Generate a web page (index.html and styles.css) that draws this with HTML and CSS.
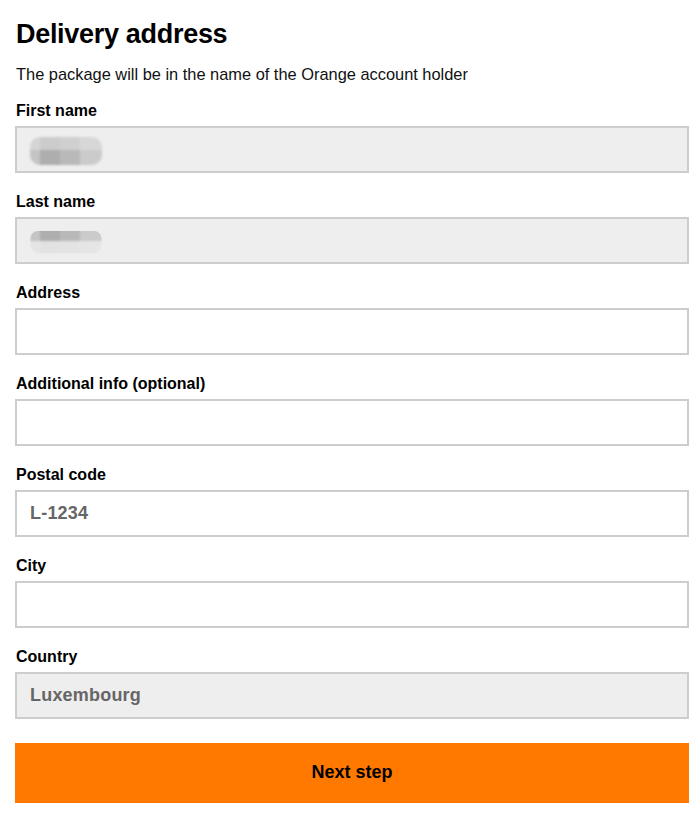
FILE: index.html
```html
<!DOCTYPE html>
<html lang="en">
<head>
<meta charset="utf-8">
<title>Delivery address</title>
<link rel="stylesheet" href="styles.css">
</head>
<body>
<main class="page">
  <h1 class="title">Delivery address</h1>
  <p class="subtitle">The package will be in the name of the Orange account holder</p>
  <form class="form">
    <div class="field">
      <label class="label">First name</label>
      <div class="input input-readonly"><span class="blur"></span></div>
    </div>
    <div class="field">
      <label class="label">Last name</label>
      <div class="input input-readonly"><span class="blur blur-2"></span></div>
    </div>
    <div class="field">
      <label class="label">Address</label>
      <div class="input"></div>
    </div>
    <div class="field">
      <label class="label">Additional info (optional)</label>
      <div class="input"></div>
    </div>
    <div class="field">
      <label class="label">Postal code</label>
      <div class="input"><span class="value">L-1234</span></div>
    </div>
    <div class="field">
      <label class="label">City</label>
      <div class="input"></div>
    </div>
    <div class="field field-last">
      <label class="label">Country</label>
      <div class="input input-readonly"><span class="value">Luxembourg</span></div>
    </div>
    <button type="button" class="button">Next step</button>
  </form>
</main>
</body>
</html>
```

FILE: styles.css
```css
html, body {
  margin: 0;
  padding: 0;
  background: #ffffff;
}
body {
  font-family: "Liberation Sans", Arial, sans-serif;
  color: #000;
}
.page {
  padding: 17px 0 0 15px;
  width: 674px;
}
.title {
  margin: 0 0 0 1px;
  font-size: 27px;
  line-height: 34px;
  font-weight: 700;
  letter-spacing: -0.3px;
}
.subtitle {
  margin: 13px 0 16px 1px;
  font-size: 16.4px;
  line-height: 20px;
  color: #111;
}
.form {
  display: flex;
  flex-direction: column;
}
.field {
  display: flex;
  flex-direction: column;
  margin-bottom: 18px;
}
.field-last {
  margin-bottom: 24px;
}
.label {
  display: block;
  margin: 0 0 6px 1px;
  padding-top: 1px;
  font-size: 16px;
  line-height: 19px;
  font-weight: 700;
}
.input {
  box-sizing: border-box;
  height: 47px;
  border: 2px solid #cdcdcd;
  background: #fff;
  display: flex;
  align-items: center;
  padding-left: 13px;
}
.input-readonly {
  background: #eeeeee;
}
.value {
  font-size: 18px;
  font-weight: 700;
  color: #666;
  letter-spacing: 0.2px;
}
.blur {
  display: block;
  width: 72px;
  height: 28px;
  margin-top: 2px;
  border-radius: 10px;
  background:
    linear-gradient(180deg, rgba(224,224,224,0.6) 0 45%, transparent 45%),
    linear-gradient(90deg, #c4c4c4 0 14%, #aeaeae 14% 42%, #b9b9b9 42% 70%, #cbcbcb 70% 100%);
  filter: blur(1px);
}
.blur-2 {
  margin-top: -2px;
  background:
    linear-gradient(180deg, transparent 0 20%, transparent 55%, rgba(232,232,232,0.9) 55%),
    linear-gradient(90deg, #c4c4c4 0 14%, #aeaeae 14% 42%, #b9b9b9 42% 70%, #cbcbcb 70% 100%);
  clip-path: inset(20% 0 0 0 round 8px);
}
.button {
  box-sizing: border-box;
  height: 60px;
  width: 674px;
  border: none;
  background: #ff7900;
  font-family: "Liberation Sans", Arial, sans-serif;
  font-size: 18px;
  font-weight: 700;
  color: #000;
  padding-bottom: 2px;
  cursor: pointer;
}
```
